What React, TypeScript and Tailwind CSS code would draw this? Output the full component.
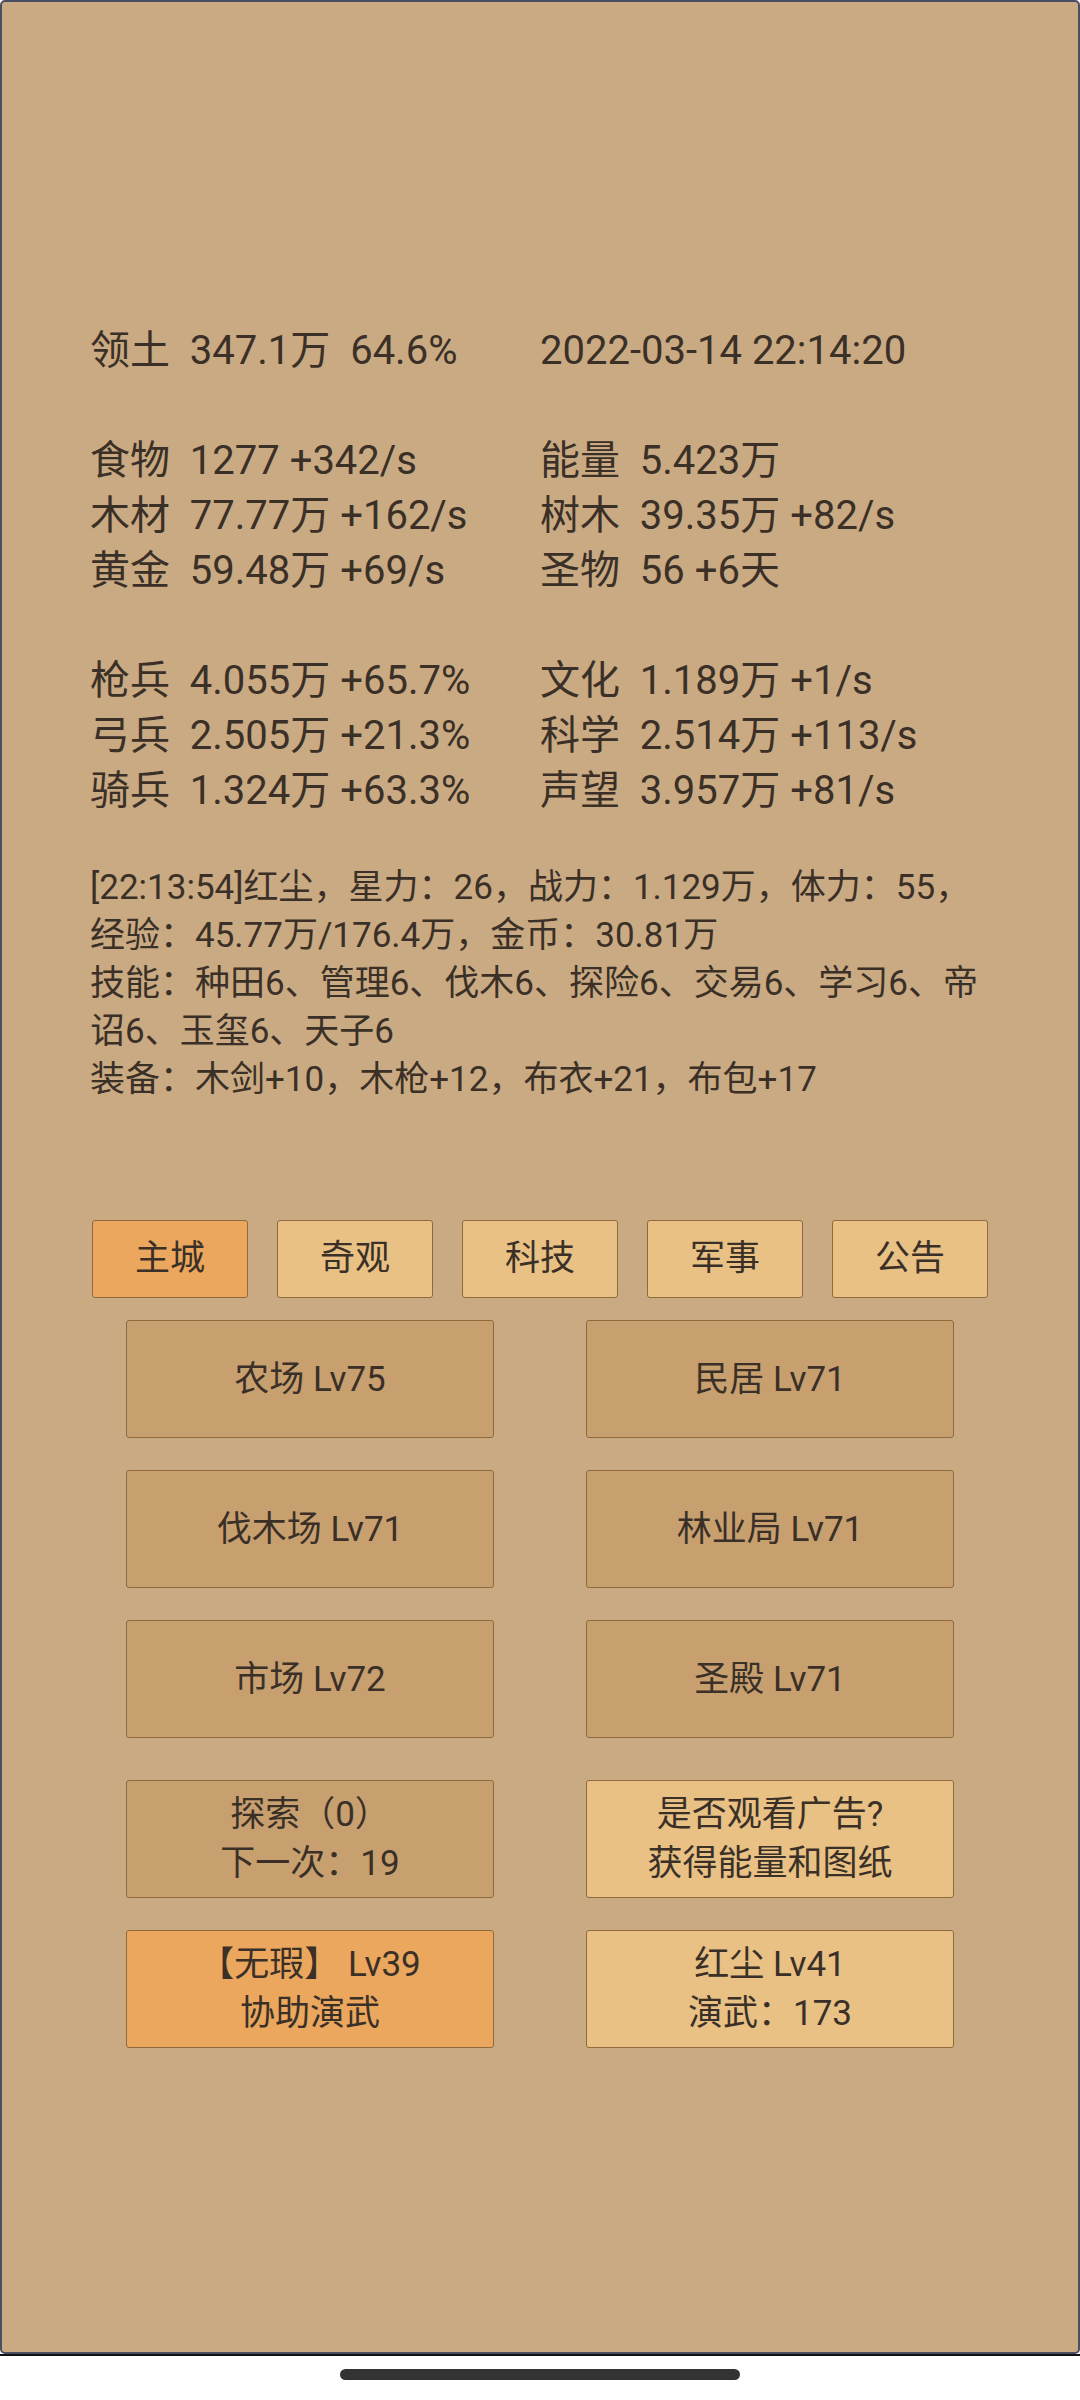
import React from "react"

const font = 'Roboto, "Noto Sans CJK SC", sans-serif'

const stats: [string, string][] = [
  ["领土  347.1万  64.6%", "2022-03-14 22:14:20"],
  ["", ""],
  ["食物  1277 +342/s", "能量  5.423万"],
  ["木材  77.77万 +162/s", "树木  39.35万 +82/s"],
  ["黄金  59.48万 +69/s", "圣物  56 +6天"],
  ["", ""],
  ["枪兵  4.055万 +65.7%", "文化  1.189万 +1/s"],
  ["弓兵  2.505万 +21.3%", "科学  2.514万 +113/s"],
  ["骑兵  1.324万 +63.3%", "声望  3.957万 +81/s"],
]

const tabs = ["主城", "奇观", "科技", "军事", "公告"]

const buildings = [
  "农场 Lv75",
  "民居 Lv71",
  "伐木场 Lv71",
  "林业局 Lv71",
  "市场 Lv72",
  "圣殿 Lv71",
]

function BigButton({ lines, tone }: { lines: string[]; tone: "plain" | "light" | "orange" }) {
  const bg =
    tone === "orange" ? "bg-[#eba75e]" : tone === "light" ? "bg-[#e9c185]" : "bg-[#c8a06f]"
  return (
    <div
      className={`${bg} h-[118px] w-[368px] rounded-[3px] border border-[#8e6a3e] flex flex-col items-center justify-center text-[35px] leading-[49px] whitespace-pre`}
    >
      {lines.map((l, i) => (
        <div key={i}>{l}</div>
      ))}
    </div>
  )
}

export default function App() {
  return (
    <div className="w-[1080px] h-[2400px] bg-white flex flex-col text-[#3a3027]" style={{ fontFamily: font }}>
      <div className="h-[2354px] bg-[#caaa82] border-2 border-[#4b4e63] rounded-[5px] px-[88px] pt-[321px]">
        {/* stats */}
        <div className="grid grid-cols-[450px_1fr] text-[40px] leading-[55px] whitespace-pre">
          {stats.map(([a, b], i) => (
            <React.Fragment key={i}>
              <div className="h-[55px]">{a}</div>
              <div className="h-[55px]">{b}</div>
            </React.Fragment>
          ))}
        </div>

        {/* hero detail */}
        <div className="mt-[46px] text-[35px] leading-[48px]">
          <div>[22:13:54]红尘，星力：26，战力：1.129万，体力：55，</div>
          <div>经验：45.77万/176.4万，金币：30.81万</div>
          <div>技能：种田6、管理6、伐木6、探险6、交易6、学习6、帝</div>
          <div>诏6、玉玺6、天子6</div>
          <div>装备：木剑+10，木枪+12，布衣+21，布包+17</div>
        </div>

        {/* tabs */}
        <div className="mt-[116px] px-[2px] flex justify-between">
          {tabs.map((t, i) => (
            <div
              key={t}
              className={`${i === 0 ? "bg-[#eba75e]" : "bg-[#e9c185]"} h-[78px] w-[156px] rounded-[3px] border border-[#8e6a3e] flex items-center justify-center text-[35px]`}
            >
              {t}
            </div>
          ))}
        </div>

        {/* buildings */}
        <div className="mt-[22px] grid grid-cols-[368px_368px] justify-center gap-x-[92px] gap-y-[32px]">
          {buildings.map((b) => (
            <BigButton key={b} lines={[b]} tone="plain" />
          ))}
        </div>

        <div className="mt-[42px] grid grid-cols-[368px_368px] justify-center gap-x-[92px] gap-y-[32px]">
          <BigButton lines={["探索（0）", "下一次：19"]} tone="plain" />
          <BigButton lines={["是否观看广告?", "获得能量和图纸"]} tone="light" />
          <BigButton lines={["【无瑕】 Lv39", "协助演武"]} tone="orange" />
          <BigButton lines={["红尘 Lv41", "演武：173"]} tone="light" />
        </div>
      </div>
      <div className="h-[2px] bg-[#111]" />
      <div className="flex justify-center pt-[13px]">
        <div className="h-[11px] w-[400px] rounded-full bg-[#333]" />
      </div>
    </div>
  )
}
